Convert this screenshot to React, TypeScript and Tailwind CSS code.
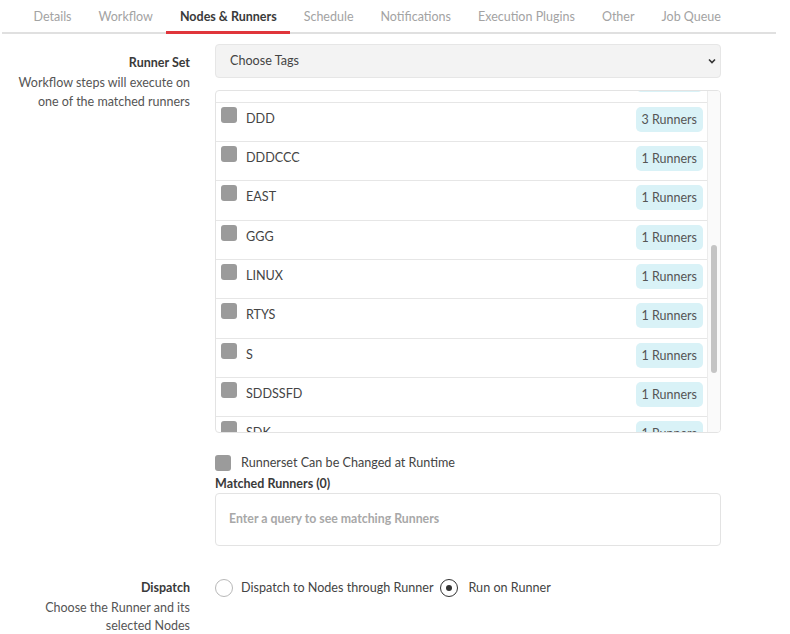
import React, { useEffect, useRef } from "react";

const tabs = [
  "Details",
  "Workflow",
  "Nodes & Runners",
  "Schedule",
  "Notifications",
  "Execution Plugins",
  "Other",
  "Job Queue",
];

// tag list (only part of it is visible, the box is scrolled)
const tags = [
  { name: "AAA", count: 1 },
  { name: "ABC", count: 2 },
  { name: "ADMIN", count: 1 },
  { name: "ALPHA", count: 1 },
  { name: "APP", count: 2 },
  { name: "AWS", count: 1 },
  { name: "BBB", count: 1 },
  { name: "BETA", count: 1 },
  { name: "CCC", count: 2 },
  { name: "CENTOS", count: 1 },
  { name: "DB", count: 1 },
  { name: "DDD", count: 3 },
  { name: "DDDCCC", count: 1 },
  { name: "EAST", count: 1 },
  { name: "GGG", count: 1 },
  { name: "LINUX", count: 1 },
  { name: "RTYS", count: 1 },
  { name: "S", count: 1 },
  { name: "SDDSSFD", count: 1 },
  { name: "SDK", count: 1 },
  { name: "TEST", count: 1 },
  { name: "WEST", count: 1 },
  { name: "WINDOWS", count: 1 },
];

const ROW = 39.33;

export default function App() {
  const listRef = useRef<HTMLDivElement>(null);

  useEffect(() => {
    if (listRef.current) {
      listRef.current.scrollTop = Math.round(11 * ROW - 12);
    }
  }, []);

  return (
    <div className="w-[790px] h-[634px] bg-white font-['Lato',sans-serif] text-[#333] overflow-hidden">
      {/* tabs */}
      <ul className="flex ml-[2px] w-[774px] h-[34px] pl-[18px] border-b-2 border-[#e0e0e0]">
        {tabs.map((t) => (
          <li
            key={t}
            className={`px-[13.5px] h-[34px] -mb-[2px] flex items-center text-[12.5px] ${
              t === "Nodes & Runners"
                ? "font-bold text-[#3a3a3a] border-b-[3px] border-[#e0353b]"
                : "text-[#a3a3a3]"
            }`}
          >
            <span className={t === "Nodes & Runners" ? "pt-[3px]" : ""}>{t}</span>
          </li>
        ))}
      </ul>

      <div className="grid grid-cols-[190px_506px] gap-x-[25px] mt-[10px]">
        {/* runner set */}
        <div className="text-right pt-[10px]">
          <div className="text-[12.5px] font-bold text-[#3a3a3a] leading-[18px]">Runner Set</div>
          <div className="text-[12.5px] text-[#555] leading-[19px] mt-[1px]">
            Workflow steps will execute on
            <br />
            one of the matched runners
          </div>
        </div>
        <div>
          <div className="h-[34px] bg-[#f3f3f3] border border-[#e6e6e6] rounded-[4px] flex items-center pl-[14px] pr-[3px] text-[12.6px] text-[#444]">
            <span>Choose Tags</span>
            <svg className="ml-auto" width="10" height="10" viewBox="0 0 10 10">
              <path d="M2 3.5 L5 6.5 L8 3.5" fill="none" stroke="#333" strokeWidth="1.6" />
            </svg>
          </div>

          <div className="mt-[12px] h-[343px] border border-[#e3e3e3] rounded-[4px] flex overflow-hidden">
            <div ref={listRef} className="flex-1 overflow-hidden">
              {tags.map((tag) => (
                <div
                  key={tag.name}
                  className="h-[39.33px] flex items-start pl-[5px] pr-[4px] pt-[4px] border-b border-[#e6e6e6]"
                >
                  <span className="w-4 h-4 rounded-[3px] bg-[#9b9b9b] shrink-0" />
                  <span className="ml-[9px] mt-[4px] text-[12.6px] leading-[16px] text-[#444]">{tag.name}</span>
                  <span className="ml-auto h-[25px] px-[6px] rounded-[5px] bg-[#d9f2f7] text-[12.5px] leading-[25px] text-[#555]">
                    {tag.count} Runners
                  </span>
                </div>
              ))}
            </div>
            {/* scrollbar */}
            <div className="w-[13px] shrink-0 bg-[#fafafa] border-l border-[#ececec]">
              <div className="mx-auto mt-[154px] w-[6px] h-[128px] rounded-full bg-[#c4c4c4]" />
            </div>
          </div>

          <label className="flex items-center mt-[22px] h-[16px]">
            <span className="w-4 h-4 rounded-[3px] bg-[#9b9b9b] shrink-0" />
            <span className="ml-[10px] text-[12.6px] text-[#444]">Runnerset Can be Changed at Runtime</span>
          </label>

          <div className="mt-[4px] text-[12.5px] font-bold text-[#3a3a3a] leading-[18px]">Matched Runners (0)</div>
          <div className="h-[53px] border border-[#e3e3e3] rounded-[4px] flex items-center pl-[13px] text-[12.3px] font-bold text-[#a8a8a8]">
            Enter a query to see matching Runners
          </div>
        </div>

        {/* dispatch */}
        <div className="text-right mt-[33px]">
          <div className="text-[12.5px] font-bold text-[#3a3a3a] leading-[18px]">Dispatch</div>
          <div className="text-[12.5px] text-[#555] leading-[18px] mt-[2px]">
            Choose the Runner and its
            <br />
            selected Nodes
          </div>
        </div>
        <div className="mt-[33px] flex items-start">
          <label className="flex items-center h-[18px]">
            <span className="w-[18px] h-[18px] rounded-full border-[1.5px] border-[#b8b8b8] shrink-0" />
            <span className="ml-[8px] text-[12.6px] text-[#444]">Dispatch to Nodes through Runner</span>
          </label>
          <label className="flex items-center h-[18px] ml-[7px]">
            <span className="w-[18px] h-[18px] rounded-full border-[1.5px] border-[#333] shrink-0 flex items-center justify-center">
              <span className="w-[6px] h-[6px] rounded-full bg-[#333]" />
            </span>
            <span className="ml-[10px] text-[12.6px] text-[#444]">Run on Runner</span>
          </label>
        </div>
      </div>
    </div>
  );
}
